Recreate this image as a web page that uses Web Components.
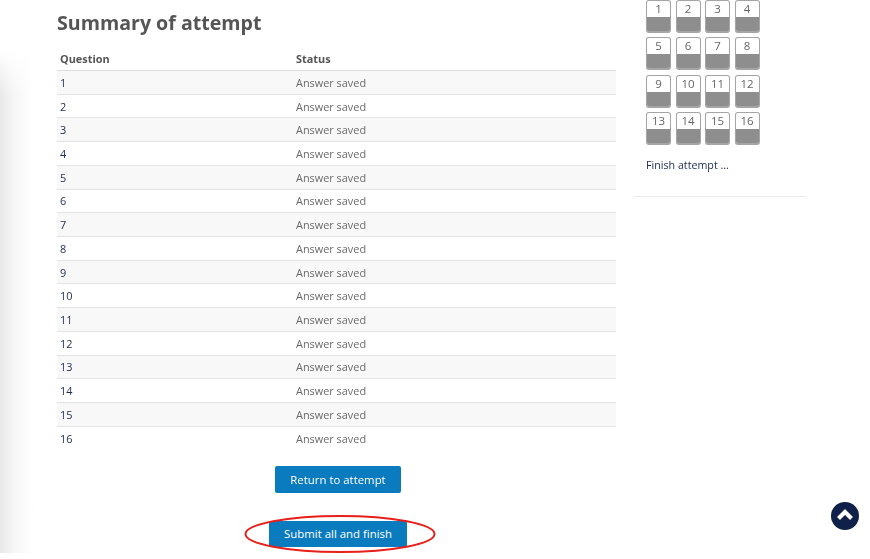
<!DOCTYPE html>
<html>
<head>
<meta charset="utf-8">
<title>Summary of attempt</title>
<style>
  html, body { margin: 0; height: 100%; background: #fff; overflow: hidden; }
  body { font-family: "Open Sans", "Liberation Sans", sans-serif; }
</style>
</head>
<body>
<quiz-page></quiz-page>
<script>
// one row of the summary table
class SummaryRow extends HTMLElement {
  constructor() {
    super();
    this.attachShadow({ mode: "open" });
    this.shadowRoot.innerHTML = `
      <style>
        :host {
          display: grid;
          grid-template-columns: 236px 1fr;
          height: 23.73px;
          box-sizing: border-box;
          border-bottom: 1px solid #e3e3e3;
          padding-left: 3px;
          align-items: center;
          font-size: 10.9px;
          background: var(--row-bg, #fff);
        }
        :host([last]) { border-bottom: 0; }
        .q { color: #1d2b4f; }
        .s { color: #6a6a6a; }
      </style>
      <span class="q"><slot name="question"></slot></span>
      <span class="s"><slot></slot></span>
    `;
  }
}
customElements.define("summary-row", SummaryRow);

// blue moodle style button
class ActionButton extends HTMLElement {
  constructor() {
    super();
    this.attachShadow({ mode: "open" });
    this.shadowRoot.innerHTML = `
      <style>
        :host {
          display: inline-flex;
          align-items: center;
          justify-content: center;
          height: 26.5px;
          padding: 0 15px;
          background: #0b7bbf;
          border-radius: 2px;
          color: #fff;
          font-size: 11.4px;
          white-space: nowrap;
        }
      </style>
      <slot></slot>
    `;
  }
}
customElements.define("action-button", ActionButton);

// small question box in the quiz navigation
class NavButton extends HTMLElement {
  constructor() {
    super();
    this.attachShadow({ mode: "open" });
    this.shadowRoot.innerHTML = `
      <style>
        :host {
          display: flex;
          flex-direction: column;
          width: 25px;
          height: 33px;
          box-sizing: border-box;
          border: 1px solid #a5a5a5;
          border-bottom-width: 2px;
          border-radius: 3px;
          overflow: hidden;
          background: #fff;
          color: #666;
          font-size: 11.5px;
        }
        .n { height: 16px; line-height: 15px; text-align: center; }
        .b { flex: 1; background: #8e8e8e; }
      </style>
      <div class="n"><slot></slot></div>
      <div class="b"></div>
    `;
  }
}
customElements.define("nav-button", NavButton);

class QuizNav extends HTMLElement {
  constructor() {
    super();
    this.attachShadow({ mode: "open" });
    let boxes = "";
    for (let i = 1; i <= 16; i++) boxes += `<nav-button>${i}</nav-button>`;
    this.shadowRoot.innerHTML = `
      <style>
        :host {
          display: block;
          width: 172px;
          height: 197px;
          box-sizing: border-box;
          border-bottom: 1px solid #ececec;
          padding-left: 12px;
        }
        .grid {
          display: grid;
          grid-template-columns: repeat(4, 25px);
          column-gap: 4.5px;
          row-gap: 4.6px;
          margin-top: -0.3px;
        }
        .finish {
          margin-top: 13px;
          font-size: 10.7px;
          color: #1d2b4f;
        }
      </style>
      <div class="grid">${boxes}</div>
      <div class="finish">Finish attempt ...</div>
    `;
  }
}
customElements.define("quiz-nav", QuizNav);

class AttemptSummary extends HTMLElement {
  constructor() {
    super();
    this.attachShadow({ mode: "open" });
    let rows = "";
    for (let i = 1; i <= 16; i++) {
      const bg = i % 2 ? "#f8f8f8" : "#fff";
      rows += `<summary-row style="--row-bg:${bg}" ${i === 16 ? "last" : ""}><span slot="question">${i}</span>Answer saved</summary-row>`;
    }
    this.shadowRoot.innerHTML = `
      <style>
        :host { display: block; width: 559px; }
        h2 {
          margin: 0;
          padding-top: 8px;
          height: 39px;
          box-sizing: content-box;
          font-size: 19.6px;
          line-height: 29px;
          font-weight: 700;
          color: #555;
        }
        .head {
          display: grid;
          grid-template-columns: 236px 1fr;
          height: 24px;
          box-sizing: border-box;
          padding-left: 3px;
          align-items: center;
          border-bottom: 1px solid #dcdcdc;
          font-size: 10.9px;
          font-weight: 700;
          color: #555;
        }
        .actions {
          display: flex;
          flex-direction: column;
          align-items: center;
          margin-top: 15.5px;
          padding-left: 3px;
          gap: 28px;
        }
        .submit { position: relative; }
        svg {
          position: absolute;
          left: -25px;
          top: -7px;
          width: 192px;
          height: 40px;
          overflow: visible;
        }
      </style>
      <h2>Summary of attempt</h2>
      <div class="head"><span>Question</span><span>Status</span></div>
      ${rows}
      <div class="actions">
        <action-button>Return to attempt</action-button>
        <div class="submit">
          <action-button>Submit all and finish</action-button>
          <svg viewBox="0 0 192 40"><ellipse cx="96" cy="20" rx="94.5" ry="18" fill="none" stroke="#e8201a" stroke-width="2"/></svg>
        </div>
      </div>
    `;
  }
}
customElements.define("attempt-summary", AttemptSummary);

class BackToTop extends HTMLElement {
  constructor() {
    super();
    this.attachShadow({ mode: "open" });
    this.shadowRoot.innerHTML = `
      <style>
        :host { position: absolute; left: 831px; top: 502px; width: 28px; height: 28px; display: block; }
        svg { display: block; width: 28px; height: 28px; }
      </style>
      <svg viewBox="0 0 28 28">
        <circle cx="14" cy="14" r="14" fill="#0f2148"/>
        <path d="M7.5 16.5 14 10l6.5 6.5" fill="none" stroke="#fff" stroke-width="4.2"/>
      </svg>
    `;
  }
}
customElements.define("back-to-top", BackToTop);

class QuizPage extends HTMLElement {
  constructor() {
    super();
    this.attachShadow({ mode: "open" });
    this.shadowRoot.innerHTML = `
      <style>
        :host {
          display: block;
          padding-left: 57px;
          height: 559px;
          box-sizing: border-box;
          position: relative;
          overflow: hidden;
        }
        /* the soft shadow down the left edge of the reference */
        .shade {
          position: absolute;
          left: 0;
          top: 50px;
          bottom: 6px;
          width: 34px;
          background: linear-gradient(to right, #e8e8e8, #f6f6f6 40%, #fff);
          -webkit-mask-image: linear-gradient(to bottom, transparent, #000 45px);
          mask-image: linear-gradient(to bottom, transparent, #000 45px);
        }
        .inner { display: flex; gap: 18px; position: relative; filter: blur(0.35px); }
      </style>
      <div class="shade"></div>
      <div class="inner">
        <attempt-summary></attempt-summary>
        <quiz-nav></quiz-nav>
      </div>
      <back-to-top></back-to-top>
    `;
  }
}
customElements.define("quiz-page", QuizPage);
</script>
</body>
</html>
